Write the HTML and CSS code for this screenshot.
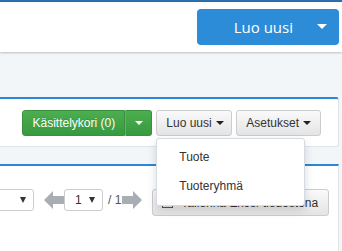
FILE: index.html
```html
<!DOCTYPE html>
<html lang="fi">
<head>
  <meta charset="UTF-8">
  <title>Tuotteet</title>
  <link rel="stylesheet" href="styles.css">
</head>
<body>
  <div class="topline"></div>

  <!-- Header -->
  <div class="header">
    <button class="btn-new">
      <span>Luo uusi</span>
      <span class="caret-white"></span>
    </button>
  </div>

  <div class="main">
    <!-- Toolbar panel -->
    <div class="panel toolbar">
      <div class="btn-group">
        <button class="btn btn-success">Käsittelykori (0)</button>
        <button class="btn btn-success btn-split"><span class="caret white"></span></button>
      </div>
      <div class="dropdown">
        <button class="btn btn-default">Luo uusi <span class="caret"></span></button>
        <ul class="dropdown-menu">
          <li>Tuote</li>
          <li>Tuoteryhmä</li>
        </ul>
      </div>
      <button class="btn btn-default">Asetukset <span class="caret"></span></button>
    </div>

    <!-- List panel -->
    <div class="panel list">
      <div class="pager">
        <div class="select wide"><span class="tri"></span></div>
        <svg class="arrow" width="20" height="18" viewBox="0 0 20 18">
          <polygon points="0,9 9,0 9,5 20,5 20,13 9,13 9,18" fill="#a8aeb4"/>
        </svg>
        <div class="select page"><span class="num">1</span><span class="tri"></span></div>
        <span class="total">/ 1</span>
        <svg class="arrow" width="20" height="18" viewBox="0 0 20 18">
          <polygon points="20,9 11,0 11,5 0,5 0,13 11,13 11,18" fill="#a8aeb4"/>
        </svg>
        <button class="btn btn-default btn-excel">
          <svg width="11" height="10" viewBox="0 0 11 10">
            <rect x="0.5" y="0.5" width="10" height="9" fill="none" stroke="#555"/>
            <rect x="2" y="4" width="7" height="1" fill="#555"/>
            <rect x="2" y="6" width="7" height="1" fill="#555"/>
          </svg>
          Tallenna Excel-tiedostona
        </button>
      </div>
    </div>
  </div>
</body>
</html>
```

FILE: styles.css
```css
* { margin: 0; padding: 0; box-sizing: border-box; }
html { overflow: hidden; }
body {
  font-family: "Liberation Sans", Arial, sans-serif;
  font-size: 12px;
  color: #333;
  background: #f3f6f9;
  height: 251px;
  overflow: hidden;
}
.topline {
  height: 2px;
  background: #2a6fb0;
}
.header {
  height: 50px;
  background: #fff;
  box-shadow: 0 1px 2px rgba(0,0,0,0.22);
  display: flex;
  justify-content: flex-end;
  align-items: flex-start;
  padding: 7px 3px 0 0;
  position: relative;
}
.btn-new {
  width: 142px;
  height: 36px;
  border: none;
  border-radius: 4px;
  background: #2d8cd7;
  color: #fff;
  font-family: "Open Sans", sans-serif;
  font-size: 15px;
  display: flex;
  align-items: center;
  justify-content: flex-end;
  padding-right: 12px;
  gap: 24px;
}
.caret-white {
  border-left: 5px solid transparent;
  border-right: 5px solid transparent;
  border-top: 5px solid #fff;
  margin-top: -2px;
}
.main {
  padding-top: 45px;
  padding-right: 3px;
}
.panel {
  background: #fff;
  border-top: 2px solid #2b87d8;
  border-right: 1px solid #e1e5ea;
  border-bottom: 1px solid #e1e5ea;
  border-radius: 0 3px 3px 0;
}
.toolbar {
  height: 50px;
  display: flex;
  justify-content: flex-end;
  align-items: flex-start;
  gap: 4px;
  padding: 11px 17px 0 0;
}
.btn-group { display: flex; }
.btn {
  height: 26px;
  font-family: "Liberation Sans", Arial, sans-serif;
  font-size: 12px;
  white-space: nowrap;
  border-radius: 3px;
  padding: 0 9px;
  display: flex;
  align-items: center;
  gap: 4px;
}
.btn-success {
  color: #fff;
  border: 1px solid #3b903e;
  background: linear-gradient(to bottom, #4cae4f, #389a40);
  text-shadow: 0 -1px 0 rgba(0,0,0,0.15);
}
.btn-group .btn-success:first-child {
  width: 103px;
  border-radius: 3px 0 0 3px;
  justify-content: center;
  padding: 0;
}
.btn-split {
  width: 27px;
  justify-content: center;
  border-radius: 0 3px 3px 0;
  border-left: 1px solid #7c9f7c;
}
.btn-default {
  color: #333;
  border: 1px solid #ccc;
  background: linear-gradient(to bottom, #fafafa, #e4e4e4);
}
.caret {
  border-left: 4px solid transparent;
  border-right: 4px solid transparent;
  border-top: 4px solid #222;
}
.caret.white { border-top-color: #fff; }
.dropdown { position: relative; }
.dropdown .btn { width: 76px; }
.dropdown-menu {
  position: absolute;
  top: 28px;
  left: 0;
  width: 149px;
  list-style: none;
  background: #fff;
  border: 1px solid #d5dbe2;
  border-radius: 3px;
  box-shadow: 0 4px 10px rgba(0,0,0,0.15);
  padding: 4px 0;
  z-index: 5;
}
.dropdown-menu li {
  height: 29px;
  line-height: 29px;
  padding-left: 22px;
  color: #333;
}
.list {
  margin-top: 17px;
  height: 87px;
  padding-top: 23px;
  border-bottom: none;
  border-radius: 0;
}
.pager {
  display: flex;
  align-items: flex-start;
  height: 27px;
}
.select {
  height: 22px;
  background: #fff;
  border: 1px solid #ccc;
  border-radius: 3px;
  display: flex;
  align-items: center;
  justify-content: flex-end;
  padding-right: 7px;
}
.select.wide {
  width: 50px;
  margin-left: -16px;
  margin-right: 10px;
}
.select.page {
  width: 39px;
  justify-content: space-between;
  padding-left: 10px;
}
.arrow { margin-top: 2px; }
.tri {
  border-left: 3px solid transparent;
  border-right: 3px solid transparent;
  border-top: 6px solid #333;
}
.num { color: #333; }
.total {
  color: #555;
  line-height: 22px;
  margin: 0 1px 0 5px;
}
.btn-excel {
  margin-left: 10px;
  height: 27px;
  padding: 0 10px 0 9px;
  gap: 8px;
}
```
